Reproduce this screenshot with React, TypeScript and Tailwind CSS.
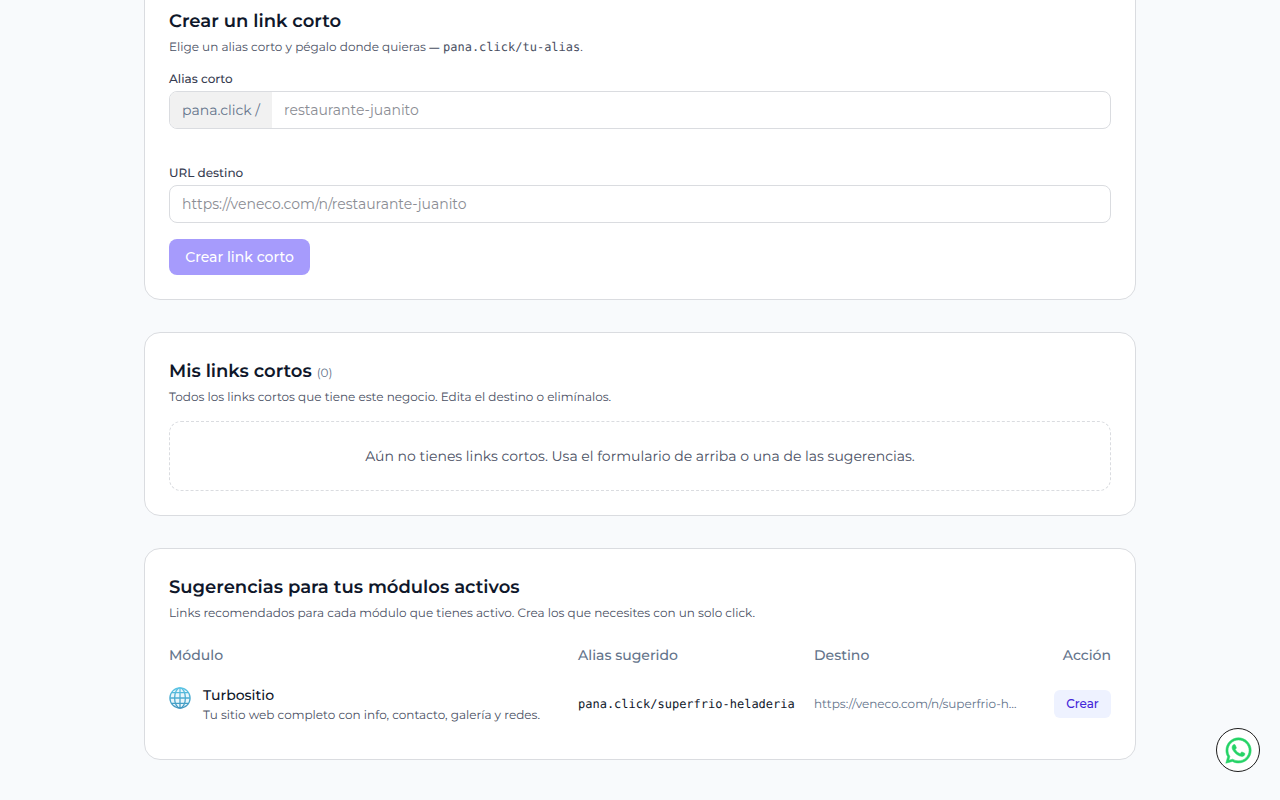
import React from "react";
import { FaWhatsapp } from "react-icons/fa";

const card = "rounded-2xl border border-[#dadce0] bg-white p-6";

function Heading({ children, sub }: { children: React.ReactNode; sub: React.ReactNode }) {
  return (
    <header>
      <h2 className="whitespace-nowrap text-lg leading-7 font-semibold text-[#0f172a]">{children}</h2>
      <p className="mt-1 -mb-px h-[17px] whitespace-nowrap text-xs leading-[17px] text-[#4a5063]">{sub}</p>
    </header>
  );
}

function Globe() {
  return (
    <svg className="mt-0.5 size-[22px] shrink-0" viewBox="0 0 22 22" fill="none">
      <defs>
        <linearGradient id="globe" x1="0" y1="0" x2="0" y2="22" gradientUnits="userSpaceOnUse">
          <stop offset="0" stopColor="#5cc6e6" />
          <stop offset="1" stopColor="#3f93bd" />
        </linearGradient>
      </defs>
      <circle cx="11" cy="11" r="10.1" fill="#e9f6fb" />
      <g stroke="url(#globe)" strokeWidth="1.3">
        <circle cx="11" cy="11" r="10.1" />
        <ellipse cx="11" cy="11" rx="5.4" ry="10.1" />
        <path d="M11.01 1L11 21M1 11L21 11.01M2.8 5.6L19.2 5.61M2.8 16.4L19.2 16.41" />
      </g>
    </svg>
  );
}

export default function App() {
  return (
    <div className="h-[800px] overflow-hidden bg-[#f8fafc] font-['Montserrat','Inter',sans-serif] [text-rendering:geometricPrecision]">
      <main className="mx-auto -mt-[18px] flex w-[992px] flex-col gap-8">
        <section className={card}>
          <Heading
            sub={
              <>
                Elige un alias corto y pégalo donde quieras <span className="text-[10px] leading-none font-semibold tracking-[0.7px]">—</span>{" "}
                <code className="font-['DejaVu_Sans_Mono',monospace] leading-none">pana.click/tu-alias</code>.
              </>
            }
          >
            Crear un link corto
          </Heading>
          <label className="mt-4 -mb-px block text-xs leading-[17px] font-medium text-[#363c50]">Alias corto</label>
          <div className="mt-1 flex h-[38px] overflow-hidden rounded-lg border border-[#dadce0] text-sm">
            <span className="flex w-[102px] items-center whitespace-nowrap bg-[#f1f1f1] px-3 text-[#64748b]">pana.click /</span>
            <input className="min-w-0 flex-1 px-3 outline-none placeholder:text-[#8b8d94]" placeholder="restaurante-juanito" />
          </div>
          <label className="mt-9 -mb-px block text-xs leading-[17px] font-medium text-[#363c50]">URL destino</label>
          <input
            className="mt-1 block h-[38px] w-full rounded-lg border border-[#dadce0] px-3 text-sm outline-none placeholder:text-[#8b8d94]"
            placeholder="https://veneco.com/n/restaurante-juanito"
          />
          <button className="mt-4 block h-9 w-[141px] whitespace-nowrap rounded-lg bg-[#a69bfc] text-sm font-medium text-white">
            Crear link corto
          </button>
        </section>

        <section className={card}>
          <Heading sub="Todos los links cortos que tiene este negocio. Edita el destino o elimínalos.">
            Mis links cortos <span className="text-xs font-normal text-[#64748b]">(0)</span>
          </Heading>
          <div className="mt-4 rounded-xl border border-dashed border-[#dadce0] p-6 text-center text-sm text-[#4a5063]">
            Aún no tienes links cortos. Usa el formulario de arriba o una de las sugerencias.
          </div>
        </section>

        <section className={card}>
          <Heading sub="Links recomendados para cada módulo que tienes activo. Crea los que necesites con un solo click.">
            Sugerencias para tus módulos activos
          </Heading>
          <div className="mt-4 grid grid-cols-[409px_236px_1fr_auto] items-center">
            <div className="py-2 text-sm font-medium text-[#64748b]">Módulo</div>
            <div className="py-2 text-sm font-medium text-[#64748b]">Alias sugerido</div>
            <div className="py-2 text-sm font-medium text-[#64748b]">Destino</div>
            <div className="py-2 text-right text-sm font-medium text-[#64748b]">Acción</div>
            <div className="flex gap-3 py-3">
              <Globe />
              <div className="whitespace-nowrap">
                <div className="text-sm font-medium text-[#0f172a]">Turbositio</div>
                <div className="mt-0.5 -mb-px text-xs leading-[17px] text-[#4a5063]">
                  Tu sitio web completo con info, contacto, galería y redes.
                </div>
              </div>
            </div>
            <code className="font-['DejaVu_Sans_Mono',monospace] text-xs text-[#0f172a]">pana.click/superfrio-heladeria</code>
            <div className="pt-px text-xs whitespace-nowrap text-[#64748b]">https://veneco.com/n/superfrio-h…</div>
            <button className="h-7 w-[57px] justify-self-end rounded-md bg-[#eef2ff] text-xs font-medium text-[#4326d9]">Crear</button>
          </div>
        </section>
      </main>
      <a className="fixed right-5 bottom-7 flex size-11 items-center justify-center rounded-full border border-[#1c1c1c] bg-white pl-px" aria-label="WhatsApp">
        <FaWhatsapp className="size-[29px] text-[#25d366]" strokeWidth={9} />
      </a>
    </div>
  );
}
